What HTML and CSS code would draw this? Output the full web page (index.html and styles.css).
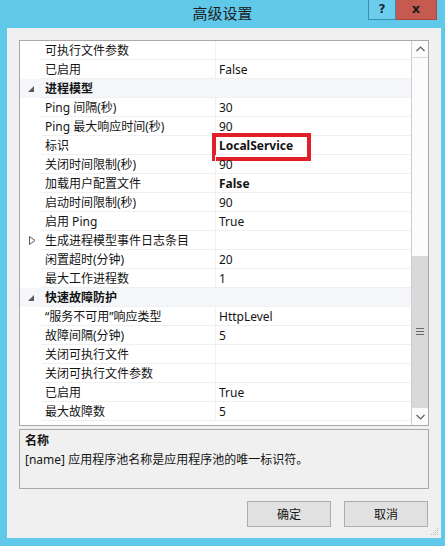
FILE: index.html
```html
<!DOCTYPE html>
<html>
<head>
<meta charset="utf-8">
<title>高级设置</title>
<link rel="stylesheet" href="styles.css">
</head>
<body>
<div class="window">
  <div class="titlebar">
    <div class="tb-left"></div>
    <div class="title">高级设置</div>
    <div class="caption-btns">
      <div class="btn-help">?</div>
      <div class="btn-close">x</div>
    </div>
  </div>
  <div class="client">
    <div class="grid">
      <div class="rows">
        <div class="row"><div class="gut"></div><div class="name">可执行文件参数</div><div class="val"></div></div>
        <div class="row"><div class="gut"></div><div class="name">已启用</div><div class="val">False</div></div>
        <div class="row cat"><div class="gut"><svg class="exp" width="7" height="7" viewBox="0 0 7 7"><polygon points="6,0 6,6 0,6" fill="#5a5a5a"/></svg></div><div class="name">进程模型</div></div>
        <div class="row"><div class="gut"></div><div class="name">Ping 间隔(秒)</div><div class="val">30</div></div>
        <div class="row"><div class="gut"></div><div class="name">Ping 最大响应时间(秒)</div><div class="val">90</div></div>
        <div class="row"><div class="gut"></div><div class="name">标识</div><div class="val bold">LocalService<div class="mark"></div></div></div>
        <div class="row"><div class="gut"></div><div class="name">关闭时间限制(秒)</div><div class="val">90</div></div>
        <div class="row"><div class="gut"></div><div class="name">加载用户配置文件</div><div class="val bold">False</div></div>
        <div class="row"><div class="gut"></div><div class="name">启动时间限制(秒)</div><div class="val">90</div></div>
        <div class="row"><div class="gut"></div><div class="name">启用 Ping</div><div class="val">True</div></div>
        <div class="row"><div class="gut"><svg class="col" width="7" height="9" viewBox="0 0 7 9"><polygon points="0.5,0.5 6,4.5 0.5,8.5" fill="none" stroke="#5a5a5a" stroke-width="1"/></svg></div><div class="name">生成进程模型事件日志条目</div><div class="val"></div></div>
        <div class="row"><div class="gut"></div><div class="name">闲置超时(分钟)</div><div class="val">20</div></div>
        <div class="row"><div class="gut"></div><div class="name">最大工作进程数</div><div class="val">1</div></div>
        <div class="row cat"><div class="gut"><svg class="exp" width="7" height="7" viewBox="0 0 7 7"><polygon points="6,0 6,6 0,6" fill="#5a5a5a"/></svg></div><div class="name">快速故障防护</div></div>
        <div class="row"><div class="gut"></div><div class="name">“服务不可用”响应类型</div><div class="val">HttpLevel</div></div>
        <div class="row"><div class="gut"></div><div class="name">故障间隔(分钟)</div><div class="val">5</div></div>
        <div class="row"><div class="gut"></div><div class="name">关闭可执行文件</div><div class="val"></div></div>
        <div class="row"><div class="gut"></div><div class="name">关闭可执行文件参数</div><div class="val"></div></div>
        <div class="row"><div class="gut"></div><div class="name">已启用</div><div class="val">True</div></div>
        <div class="row"><div class="gut"></div><div class="name">最大故障数</div><div class="val">5</div></div>
      </div>
      <div class="scrollbar">
        <div class="sb-btn sb-up"><svg width="9" height="6" viewBox="0 0 9 6"><polyline points="0.5,5 4.5,1 8.5,5" fill="none" stroke="#606060" stroke-width="1.2"/></svg></div>
        <div class="sb-track"></div>
        <div class="sb-thumb"><svg width="8" height="7" viewBox="0 0 8 7"><rect x="0" y="0" width="8" height="1" fill="#6a6a6a"/><rect x="0" y="3" width="8" height="1" fill="#6a6a6a"/><rect x="0" y="6" width="8" height="1" fill="#6a6a6a"/></svg></div>
        <div class="sb-btn sb-down"><svg width="9" height="6" viewBox="0 0 9 6"><polyline points="0.5,1 4.5,5 8.5,1" fill="none" stroke="#606060" stroke-width="1.2"/></svg></div>
      </div>
    </div>
    <div class="desc">
      <div class="desc-title">名称</div>
      <div class="desc-text">[name] 应用程序池名称是应用程序池的唯一标识符。</div>
    </div>
    <div class="buttons">
      <div class="button">确定</div>
      <div class="button">取消</div>
    </div>
    <svg class="grip" width="8" height="8" viewBox="0 0 8 8">
      <rect x="6" y="0" width="1" height="1" fill="#b8b8b8"/>
      <rect x="4" y="2" width="1" height="1" fill="#b8b8b8"/>
      <rect x="6" y="2" width="1" height="1" fill="#b8b8b8"/>
      <rect x="2" y="4" width="1" height="1" fill="#b8b8b8"/>
      <rect x="4" y="4" width="1" height="1" fill="#b8b8b8"/>
      <rect x="6" y="4" width="1" height="1" fill="#b8b8b8"/>
      <rect x="0" y="6" width="1" height="1" fill="#b8b8b8"/>
      <rect x="2" y="6" width="1" height="1" fill="#b8b8b8"/>
      <rect x="4" y="6" width="1" height="1" fill="#b8b8b8"/>
      <rect x="6" y="6" width="1" height="1" fill="#b8b8b8"/>
    </svg>
  </div>
</div>
</body>
</html>
```
FILE: styles.css
```css
html, body {
  margin: 0;
  padding: 0;
}
body {
  background: #60c9ea;
  font-family: "Noto Sans", "Noto Sans CJK SC", sans-serif;
  font-size: 12px;
  color: #141414;
}
.window {
  width: 445px;
  height: 546px;
  background: #60c9ea;
  box-sizing: border-box;
}
.titlebar {
  height: 28px;
  display: grid;
  grid-template-columns: 1fr auto 1fr;
  padding: 0 8px;
}
.title {
  font-family: "Noto Sans CJK SC", sans-serif;
  font-size: 15px;
  line-height: 26px;
  color: #1e1e1e;
}
.caption-btns {
  justify-self: end;
  align-self: start;
  display: flex;
}
.btn-help {
  width: 28px;
  height: 20px;
  box-sizing: border-box;
  border: 1px solid #3a8db2;
  border-top: none;
  background: #6dcdec;
  text-align: center;
  font-family: "DejaVu Sans", sans-serif;
  font-weight: bold;
  font-size: 12px;
  line-height: 18px;
  color: #1a2a3a;
}
.btn-close {
  width: 41px;
  height: 20px;
  background: #c75a50;
  border-right: 1px solid #a8453d;
  border-bottom: 1px solid #a8453d;
  box-sizing: border-box;
  text-align: center;
  font-family: "DejaVu Sans", sans-serif;
  font-weight: bold;
  font-size: 13px;
  line-height: 17px;
  color: #1a1a1a;
}
.client {
  position: relative;
  margin-left: 7px;
  width: 434px;
  height: 510px;
  background: #f0f0f0;
  box-sizing: border-box;
  padding: 12px 12px 0 12px;
}
.grid {
  height: 386px;
  box-sizing: border-box;
  border: 1px solid #a9a9a9;
  background: #ffffff;
  display: flex;
}
.rows {
  flex: 1;
  display: flex;
  flex-direction: column;
}
.row {
  display: flex;
  height: 19px;
  flex: none;
}
.gut {
  width: 21px;
  flex: none;
  display: flex;
  align-items: center;
  justify-content: center;
}
.exp {
  margin-left: 1px;
  margin-top: 1px;
}
.col {
  margin-left: 4px;
}
.name {
  width: 174px;
  flex: none;
  box-sizing: border-box;
  padding-left: 4px;
  padding-top: 1px;
  line-height: 17px;
  border-bottom: 1px solid #f0f0f0;
  white-space: nowrap;
}
.val {
  position: relative;
  flex: 1;
  box-sizing: border-box;
  padding-left: 3px;
  padding-top: 1px;
  line-height: 17px;
  border-left: 1px solid #f0f0f0;
  border-bottom: 1px solid #f0f0f0;
  white-space: nowrap;
}
.bold {
  font-weight: bold;
}
.cat {
  background: #f4f6fa;
}
.cat .name {
  flex: 1;
  font-weight: bold;
  border-bottom: 1px solid #eef0f4;
}
.mark {
  position: absolute;
  left: -4px;
  top: -3px;
  width: 99px;
  height: 28px;
  box-sizing: border-box;
  border: 4px solid #e01f29;
}
.scrollbar {
  width: 17px;
  flex: none;
  box-sizing: border-box;
  border-left: 1px solid #cfcfcf;
  display: flex;
  flex-direction: column;
  background: #fbfbfb;
}
.sb-btn {
  display: flex;
  align-items: center;
  justify-content: center;
  flex: none;
  box-sizing: border-box;
}
.sb-up {
  height: 17px;
  border-bottom: 1px solid #dcdcdc;
}
.sb-track {
  height: 198px;
  flex: none;
}
.sb-thumb {
  height: 151px;
  flex: none;
  background: #d9d9d9;
  display: flex;
  align-items: center;
  justify-content: center;
}
.sb-down {
  height: 18px;
  border-top: 1px solid #dcdcdc;
}
.desc {
  margin-top: 3px;
  height: 60px;
  box-sizing: border-box;
  border: 1px solid #a9a9a9;
  background: #f0f0f0;
  padding: 2px 5px;
}
.desc-title {
  font-weight: bold;
  line-height: 18px;
}
.desc-text {
  line-height: 18px;
  margin-top: 1px;
}
.buttons {
  margin-top: 12px;
  display: flex;
  justify-content: flex-end;
  gap: 13px;
  padding-right: 1px;
}
.button {
  width: 84px;
  height: 26px;
  box-sizing: border-box;
  border: 1px solid #adadad;
  background: #e1e1e1;
  text-align: center;
  line-height: 24px;
  font-family: "Noto Sans CJK SC", sans-serif;
  font-size: 12px;
}
.grip {
  position: absolute;
  right: 2px;
  bottom: 2px;
}
```
